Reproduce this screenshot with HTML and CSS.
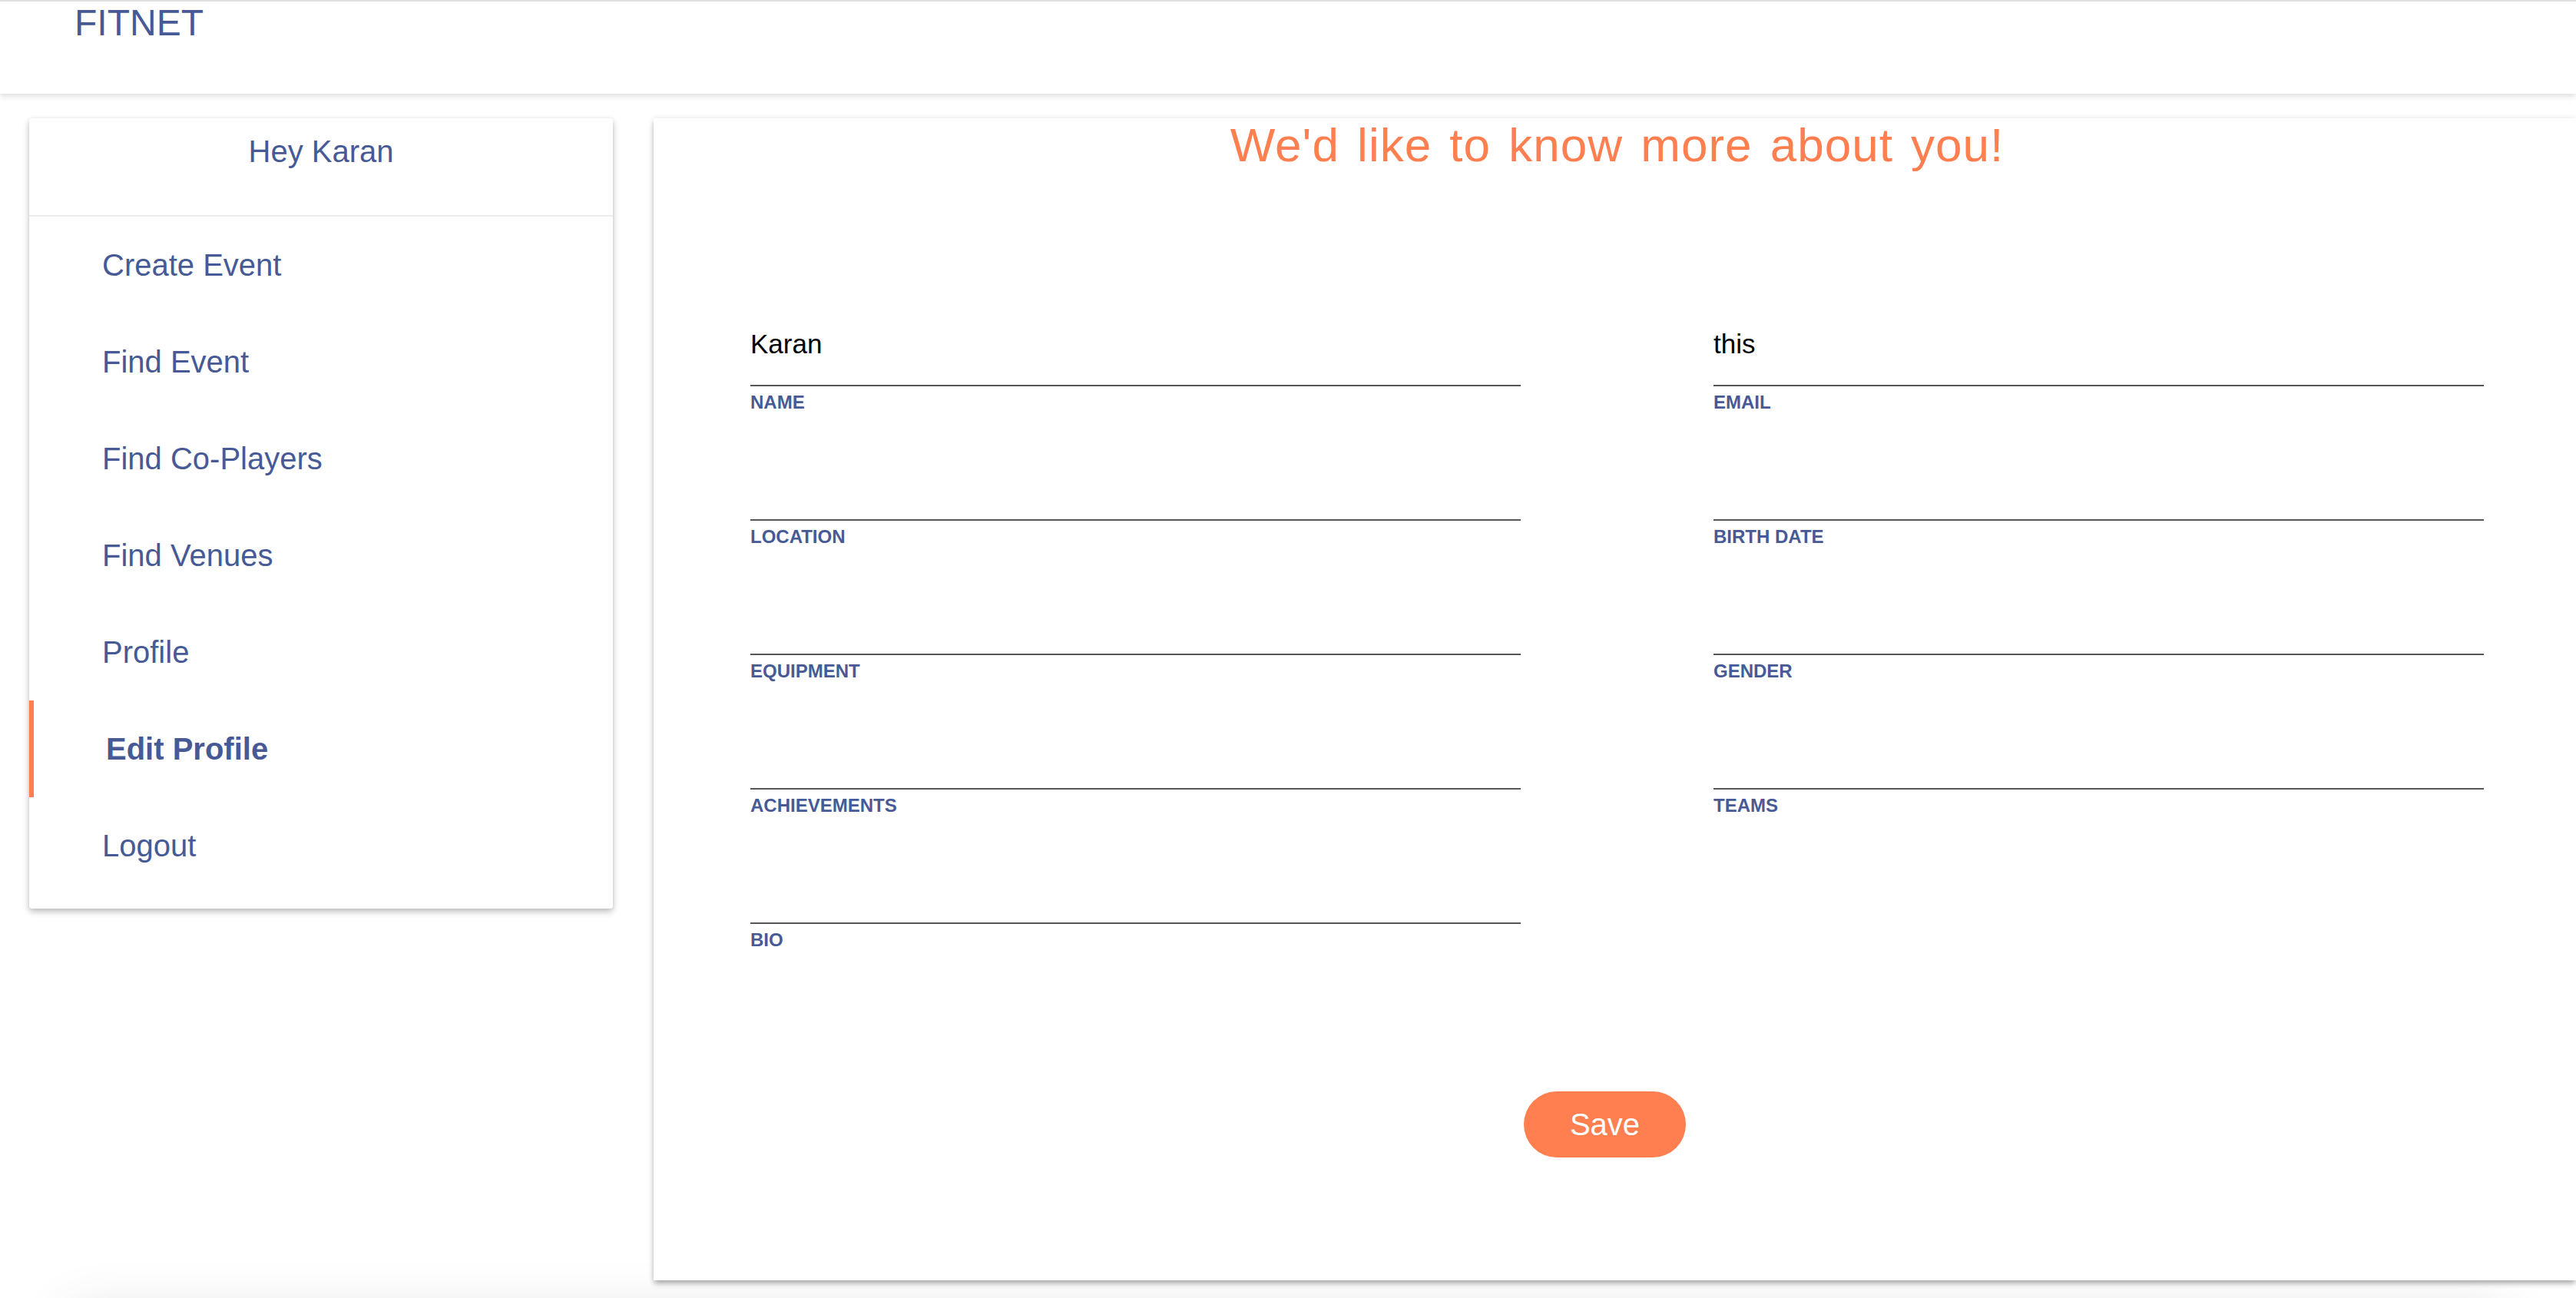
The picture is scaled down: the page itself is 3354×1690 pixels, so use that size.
FILE: index.html
```html
<!DOCTYPE html>
<html lang="en">
<head>
<meta charset="utf-8">
<title>FITNET - Edit Profile</title>
<link rel="stylesheet" href="styles.css">
</head>
<body>
<header class="topbar">
  <div class="brand">FITNET</div>
</header>
<main class="layout">
  <aside class="sidebar">
    <div class="greeting">Hey Karan</div>
    <nav class="menu">
      <a class="menu-item" href="#">Create Event</a>
      <a class="menu-item" href="#">Find Event</a>
      <a class="menu-item" href="#">Find Co-Players</a>
      <a class="menu-item" href="#">Find Venues</a>
      <a class="menu-item" href="#">Profile</a>
      <a class="menu-item active" href="#">Edit Profile</a>
      <a class="menu-item" href="#">Logout</a>
    </nav>
  </aside>
  <section class="content">
    <h1 class="title">We'd like to know more about you!</h1>
    <form class="profile-form">
      <div class="field"><div class="value">Karan</div><label>NAME</label></div>
      <div class="field"><div class="value">this</div><label>EMAIL</label></div>
      <div class="field"><div class="value"></div><label>LOCATION</label></div>
      <div class="field"><div class="value"></div><label>BIRTH DATE</label></div>
      <div class="field"><div class="value"></div><label>EQUIPMENT</label></div>
      <div class="field"><div class="value"></div><label>GENDER</label></div>
      <div class="field"><div class="value"></div><label>ACHIEVEMENTS</label></div>
      <div class="field"><div class="value"></div><label>TEAMS</label></div>
      <div class="field"><div class="value"></div><label>BIO</label></div>
    </form>
    <div class="actions"><button class="save" type="button">Save</button></div>
  </section>
</main>
<div class="footer-shade"></div>
</body>
</html>
```
FILE: styles.css
```css
html, body {
  overflow: hidden;
}
body {
  margin: 0;
  background: #ffffff;
  font-family: "Liberation Sans", Arial, Helvetica, sans-serif;
}

.topbar {
  position: relative;
  z-index: 2;
  box-sizing: border-box;
  height: 122px;
  border-top: 2px solid #e0e0e0;
  padding-left: 97px;
  background: #ffffff;
  box-shadow: 0 3px 8px rgba(0, 0, 0, 0.14);
}
.brand {
  font-size: 48px;
  line-height: 55px;
  color: #475a96;
}

.layout {
  display: flex;
  align-items: flex-start;
  gap: 53px;
  padding: 32px 0 0 38px;
}

.sidebar {
  flex: 0 0 760px;
  background: #ffffff;
  border-radius: 4px;
  box-shadow: 0 4px 8px rgba(0, 0, 0, 0.26), 0 0 4px rgba(0, 0, 0, 0.06);
  padding-bottom: 19px;
}
.greeting {
  box-sizing: border-box;
  height: 128px;
  padding-top: 20px;
  border-bottom: 2px solid #ececec;
  text-align: center;
  font-size: 40px;
  line-height: 46px;
  color: #475a96;
}
.menu {
  display: flex;
  flex-direction: column;
}
.menu-item {
  display: flex;
  align-items: center;
  height: 126px;
  padding-left: 95px;
  font-size: 40px;
  color: #475a96;
  text-decoration: none;
}
.menu-item.active {
  border-left: 6px solid #ff7f50;
  padding-left: 94px;
  font-weight: bold;
}

.content {
  flex: 1;
  box-sizing: border-box;
  height: 1513px;
  padding: 4px 120px 0 126px;
  background: #ffffff;
  box-shadow: 0 5px 7px -1px rgba(0, 0, 0, 0.3), 0 0 8px rgba(0, 0, 0, 0.1);
}
.title {
  margin: 0;
  text-align: center;
  font-size: 62px;
  line-height: 62px;
  font-weight: normal;
  letter-spacing: 1px;
  word-spacing: 5px;
  color: #ff7f50;
}

.profile-form {
  display: grid;
  grid-template-columns: 1003px 1003px;
  column-gap: 251px;
  row-gap: 65px;
  margin-top: 208px;
}
.value {
  height: 40px;
  padding-bottom: 33px;
  border-bottom: 2px solid #555555;
  font-size: 35px;
  line-height: 40px;
  color: #000000;
}
.field label {
  display: block;
  margin-top: 7px;
  font-size: 24px;
  line-height: 28px;
  font-weight: bold;
  color: #475a96;
}

.actions {
  display: flex;
  justify-content: center;
  margin-top: 183px;
  padding-right: 32px;
}
.save {
  height: 86px;
  padding: 0 60px;
  border: none;
  border-radius: 43px;
  background: #ff7f50;
  color: #ffffff;
  font-family: inherit;
  font-size: 40px;
}

.footer-shade {
  height: 200px;
  margin: 40px 90px 0;
  background: #ffffff;
  box-shadow: 0 0 70px rgba(0, 0, 0, 0.12);
}
```
